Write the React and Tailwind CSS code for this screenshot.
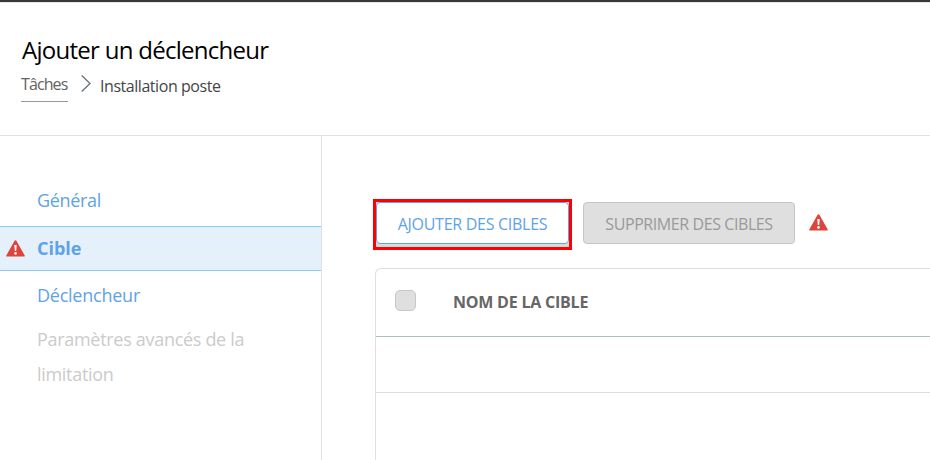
const steps = [
  { label: "Général", className: "h-[48px] pb-[4px] tracking-[-0.34px] text-[#5ea3e6]" },
  {
    label: "Cible",
    active: true,
    className: "h-[45px] border-y border-[#90caee] bg-[#e4f1fb] font-bold text-[#5ea3e6]"
  },
  { label: "Déclencheur", className: "h-[51px] pb-[3px] tracking-[-0.24px] text-[#5ea3e6]" },
  {
    label: "Paramètres avancés de la limitation",
    className: "h-[70px] tracking-[-0.3px] text-[#cbcbcb]"
  }
];

function WarningIcon({ className }) {
  return (
    <svg viewBox="0 0 19 17" className={className} aria-hidden="true">
      <path d="M8.6.8a1 1 0 0 1 1.8 0l8.3 14.6a.8.8 0 0 1-.7 1.2H1a.8.8 0 0 1-.7-1.2Z" fill="#e0433a" />
      <path d="M8.3 5h2.4l-.5 6H8.8Z" fill="#fff" />
      <circle cx="9.5" cy="13.4" r="1.3" fill="#fff" />
    </svg>
  );
}

function Header() {
  return (
    <header className="h-[136px] border-b border-[#e0e1e2] border-t-2 border-t-[#36383c] px-[21px] pt-[31px] shadow-[inset_0_1px_0_#e8e8e8]">
      <h1 className="h-9 whitespace-nowrap pl-px text-[24px] leading-[34px] tracking-[-0.72px] text-black">
        Ajouter un déclencheur
      </h1>
      <nav className="flex items-start text-[16px] leading-[31px] text-[#454545]">
        <a className="h-[33px] w-[47px] whitespace-nowrap border-b border-[#999] tracking-[-0.9px] text-[#626262]">
          Tâches
        </a>
        <svg viewBox="0 0 10 17" className="mt-[6px] ml-[12.5px] h-[17px] w-[10px]" fill="none" stroke="#6d7580" strokeWidth="1.4">
          <path d="M.7.6 9 8.5.7 16.4" />
        </svg>
        <span className="ml-[9.5px] whitespace-nowrap pt-[2px] tracking-[-0.45px]">Installation poste</span>
      </nav>
    </header>
  );
}

function Sidebar() {
  return (
    <aside className="w-[322px] shrink-0 border-r border-[#dfe1e6] pt-[42px] text-[18px] leading-[35px]">
      {steps.map((step) => (
        <div key={step.label} className={`flex items-center ${step.className}`}>
          <div className="flex w-[37px] shrink-0 pl-[6px]">
            {step.active && <WarningIcon className="h-[17px] w-[19px]" />}
          </div>
          <span className="w-[215px]">{step.label}</span>
        </div>
      ))}
    </aside>
  );
}

function TargetTable() {
  return (
    <div className="mt-[18px] h-[200px] rounded-tl-md border-t border-l border-[#dfdfdf]">
      <div className="flex h-[68px] items-center border-b border-[#adc1c3]">
        <div className="mb-[4px] ml-[19px] size-[21px] shrink-0 rounded-[5px] border border-[#c7c7c7] bg-[#dfdfdf]" />
        <span className="mb-[2px] ml-[37px] whitespace-nowrap text-[16px] font-bold tracking-[-0.22px] text-[#666]">
          NOM DE LA CIBLE
        </span>
      </div>
      <div className="h-14 border-b border-[#dfdfdf]" />
    </div>
  );
}

export default function App() {
  return (
    <main className="flex h-[460px] w-[930px] flex-col overflow-hidden bg-white font-['Open_Sans',sans-serif]">
      <Header />
      <div className="flex min-h-0 flex-1">
        <Sidebar />
        <section className="min-w-0 flex-1 pt-[63px] pl-[53px]">
          <div className="-ml-[2px] flex items-start text-[16px]">
            <div className="h-[51px] w-[199px] border-3 border-[#ff0000] bg-[#dcd9d9]">
              <button className="block h-[42px] w-[193px] whitespace-nowrap rounded-[4px] border border-[#5ea3e6] bg-white pt-px tracking-[-0.28px] text-[#5ea3e6]">
                AJOUTER DES CIBLES
              </button>
            </div>
            <button className="mt-[3px] ml-[11px] h-[42px] w-[212px] whitespace-nowrap rounded-[4px] border border-[#c5c5c5] bg-[#dfdfdf] pt-px tracking-[-0.42px] text-[#999]">
              SUPPRIMER DES CIBLES
            </button>
            <WarningIcon className="mt-[15px] ml-[14px] h-[17px] w-[19px]" />
          </div>
          <TargetTable />
        </section>
      </div>
    </main>
  );
}
